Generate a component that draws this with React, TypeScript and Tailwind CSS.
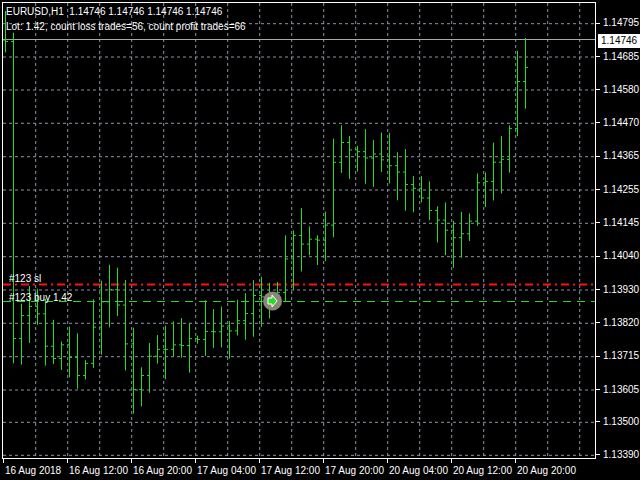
const prices = [
  ['1.14795', 23.7], ['1.14685', 57], ['1.14580', 90], ['1.14470', 123.3], ['1.14365', 156.7],
  ['1.14255', 190], ['1.14145', 223.3], ['1.14040', 256.7], ['1.13930', 290], ['1.13820', 323.3],
  ['1.13715', 356.7], ['1.13605', 390], ['1.13500', 422.3], ['1.13390', 455.3],
] as const;

const times = ['16 Aug 2018', '16 Aug 12:00', '16 Aug 20:00', '17 Aug 04:00', '17 Aug 12:00',
  '17 Aug 20:00', '20 Aug 04:00', '20 Aug 12:00', '20 Aug 20:00'];

// rough close path (x, y) of the series
const path: [number, number][] = [
  [6, 365], [20, 320], [35, 300], [50, 370], [60, 340], [80, 380], [100, 300], [110, 290], [120, 310],
  [135, 400], [140, 380], [155, 345], [175, 350], [195, 340], [210, 330], [225, 330], [245, 310],
  [255, 290], [265, 300], [275, 300], [290, 240], [310, 240], [325, 230], [335, 140], [350, 155],
  [375, 155], [390, 170], [410, 185], [425, 200], [440, 230], [455, 240], [465, 235], [475, 190],
  [490, 170], [505, 150], [515, 90], [525, 70], [530, 40],
];

function interp(x: number) {
  for (let i = 0; i < path.length - 1; i++) {
    const [x0, y0] = path[i];
    const [x1, y1] = path[i + 1];
    if (x >= x0 && x <= x1) return y0 + ((y1 - y0) * (x - x0)) / (x1 - x0);
  }
  return path[path.length - 1][1];
}

let seed = 11;
const rnd = () => {
  seed = (seed * 9301 + 49297) % 233280;
  return seed / 233280;
};

const bars: { x: number; o: number; c: number; h: number; l: number }[] = [];
let prev = interp(5);
for (let x = 5; x <= 530; x += 8) {
  const c = interp(x) + (rnd() - 0.5) * 10;
  const o = prev;
  const h = Math.min(o, c) - 2 - rnd() * 30;
  const l = Math.max(o, c) + 2 + rnd() * 30;
  bars.push({ x, o, c, h, l });
  prev = c;
}

function Chart() {
  return (
    <svg className="block w-full h-full" viewBox="3 3 592 455">
      {Array.from({ length: 18 }, (_, k) => 35.7 + 32 * k).map((x) => (
        <line key={'v' + x} x1={x} x2={x} y1={3} y2={458} stroke="#8a94a4" strokeDasharray="3 3" strokeWidth={1} />
      ))}
      {prices.map(([, y]) => (
        <line key={'h' + y} x1={3} x2={595} y1={y} y2={y} stroke="#8a94a4" strokeDasharray="3 3" strokeWidth={1} />
      ))}
      <line x1={3} x2={595} y1={39.5} y2={39.5} stroke="#a8a8a8" strokeWidth={1} />
      <line x1={3} x2={595} y1={284.5} y2={284.5} stroke="#ff1010" strokeWidth={2} strokeDasharray="8 4 2 4" />
      <line x1={3} x2={595} y1={301.5} y2={301.5} stroke="#22dd22" strokeWidth={1} strokeDasharray="8 6" />
      {bars.map((b) => (
        <g key={b.x} stroke="#22dd22" strokeWidth={1}>
          <line x1={b.x + 0.5} x2={b.x + 0.5} y1={b.h} y2={b.l} />
          <line x1={b.x - 2} x2={b.x} y1={b.o} y2={b.o} />
          <line x1={b.x + 1} x2={b.x + 3} y1={b.c} y2={b.c} />
        </g>
      ))}
      <circle cx={272.5} cy={301} r={9.5} fill="#8c8579" />
      <path d="M268 298 h4 v-3 l5 6 l-5 6 v-3 h-4 z" fill="#22dd22" stroke="#ffffff" strokeWidth={1} />
    </svg>
  );
}

export default function App() {
  return (
    <div className="w-[640px] h-[480px] bg-black text-white overflow-hidden pt-[2px] pl-[2px] text-[10px] leading-none" style={{ fontFamily: '"Liberation Sans", Arial, sans-serif' }}>
      <div className="flex">
        <div className="relative w-[594px] h-[457px] border border-white">
          <Chart />
          <div className="absolute left-[3px] top-[4px] flex flex-col gap-[5px]">
            <span>EURUSD,H1&nbsp; 1.14746 1.14746 1.14746 1.14746</span>
            <span>Lot: 1.42, count loss trades=56, count profit trades=66</span>
          </div>
          <span className="absolute left-[6px] top-[271px]">#123 sl</span>
          <span className="absolute left-[6px] top-[290px]">#123 buy 1.42</span>
        </div>
        <div className="relative flex-1">
          {prices.map(([p, y]) => (
            <div key={p} className="absolute left-0 flex items-center gap-[3px]" style={{ top: y - 7.5 }}>
              <span className="w-[4px] h-px bg-white" />
              <span>{p}</span>
            </div>
          ))}
          <div className="absolute left-[2px] top-[32px] bg-white text-black px-[3px] py-[2px]">1.14746</div>
        </div>
      </div>
      <div className="flex pl-[1px] h-[20px]">
        {times.map((t) => (
          <div key={t} className="w-[64px] flex flex-col items-start">
            <span className="w-px h-[4px] bg-white" />
            <span className="mt-[3px] pl-[2px] whitespace-nowrap">{t}</span>
          </div>
        ))}
      </div>
    </div>
  );
}
